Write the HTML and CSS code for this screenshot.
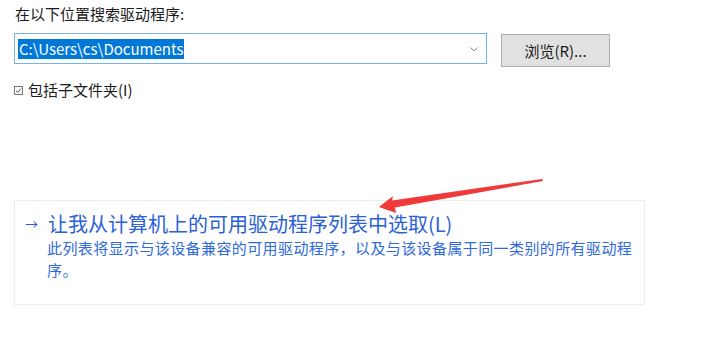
FILE: index.html
```html
<!DOCTYPE html>
<html lang="zh-CN">
<head>
<meta charset="utf-8">
<link rel="stylesheet" href="styles.css">
</head>
<body>
<div class="page">
  <div class="label">在以下位置搜索驱动程序:</div>
  <div class="row">
    <div class="combo">
      <span class="sel">C:\Users\cs\Documents</span>
      <svg class="chev" width="8" height="5" viewBox="0 0 8 5"><path d="M0.5 0.5 L4 4 L7.5 0.5" fill="none" stroke="#8a8a8a" stroke-width="1"/></svg>
    </div>
    <div class="btn">浏览(R)...</div>
  </div>
  <div class="check">
    <svg class="box" width="9" height="9" viewBox="0 0 9 9"><rect x="0.5" y="0.5" width="8" height="8" fill="#fff" stroke="#777"/><path d="M2 4.6 L3.8 6.3 L7 2.6" fill="none" stroke="#444" stroke-width="1"/></svg>
    <span>包括子文件夹(I)</span>
  </div>
  <div class="card">
    <div class="link"><span class="arr">→</span><span>让我从计算机上的可用驱动程序列表中选取(L)</span></div>
    <div class="desc">此列表将显示与该设备兼容的可用驱动程序，以及与该设备属于同一类别的所有驱动程序。</div>
  </div>
</div>
<svg class="redarrow" width="704" height="347" viewBox="0 0 704 347">
  <polygon points="379,207 393,196 392,200.5 542,179 543,181 395,207.5 396,213" fill="#f03a3a"/>
</svg>
</body>
</html>
```
FILE: styles.css
```css
html, body {
  margin: 0;
  padding: 0;
  background: #fff;
}
body {
  width: 704px;
  height: 347px;
  overflow: hidden;
  position: relative;
  font-family: "Noto Sans CJK SC", "Open Sans", sans-serif;
  color: #1a1a1a;
}
.page {
  padding: 3px 0 0 14px;
}
.label {
  font-size: 15px;
  line-height: 22px;
  padding-left: 1px;
}
.row {
  display: flex;
  align-items: flex-start;
  gap: 14px;
  margin-top: 8px;
}
.combo {
  box-sizing: border-box;
  width: 473px;
  height: 31px;
  border: 1px solid #73b3ea;
  display: flex;
  align-items: center;
  justify-content: space-between;
  padding: 0 8px 0 3px;
}
.sel {
  background: #0078d7;
  color: #fff;
  font-size: 15px;
  line-height: 20px;
  padding: 0 1px;
}
.chev {
  display: block;
  margin-top: 1px;
}
.btn {
  box-sizing: border-box;
  width: 109px;
  height: 33px;
  margin-top: 1px;
  background: #e1e1e1;
  border: 1px solid #adadad;
  display: flex;
  align-items: center;
  justify-content: center;
  font-size: 15px;
}
.check {
  display: flex;
  align-items: center;
  gap: 5px;
  margin-top: 13px;
  font-size: 15px;
  line-height: 20px;
}
.box {
  display: block;
  margin-top: 1px;
}
.card {
  box-sizing: border-box;
  width: 631px;
  height: 105px;
  margin-top: 100px;
  border: 1px solid #ececec;
  padding: 10px 0 0 9px;
  color: #2a62d6;
}
.link {
  display: flex;
  align-items: center;
  font-size: 20px;
  line-height: 26px;
}
.arr {
  box-sizing: border-box;
  font-size: 13px;
  width: 24px;
  padding-left: 1px;
}
.desc {
  margin-left: 23px;
  width: 590px;
  font-size: 15px;
  line-height: 22px;
  letter-spacing: 0.4px;
  color: #2f6ad9;
}
.redarrow {
  position: absolute;
  left: 0;
  top: 0;
  pointer-events: none;
}
```
